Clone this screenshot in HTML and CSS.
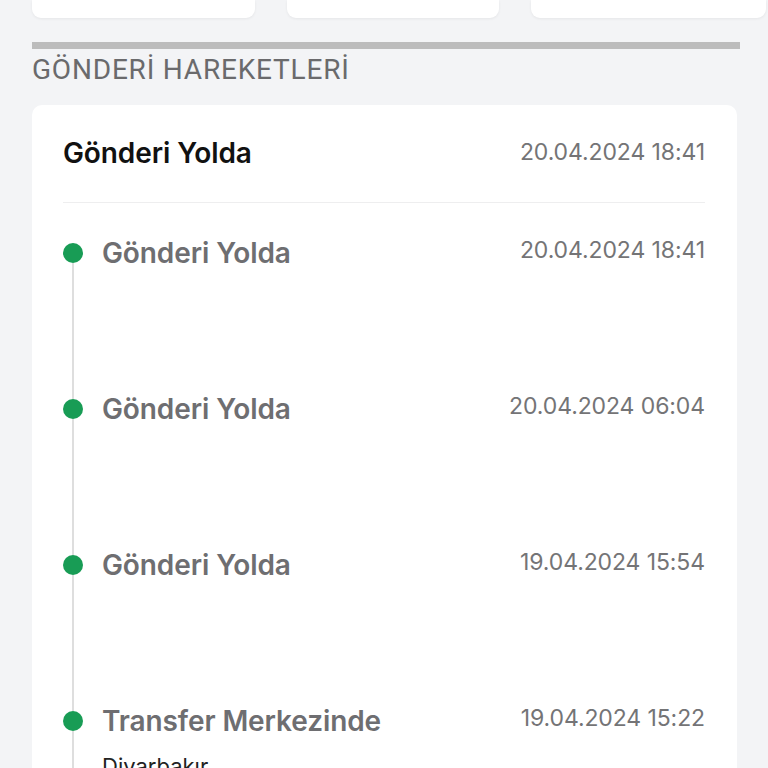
FILE: index.html
```html
<!DOCTYPE html>
<html lang="tr">
<head>
<meta charset="utf-8">
<link rel="stylesheet" href="styles.css">
</head>
<body>
<div class="top-cards">
  <div class="tcard"></div>
  <div class="tcard"></div>
  <div class="tcard"></div>
</div>
<div class="bar"></div>
<h2 class="section-title">GÖNDERİ HAREKETLERİ</h2>
<div class="card">
  <div class="card-head">
    <div class="head-title">Gönderi Yolda</div>
    <div class="date">20.04.2024 18:41</div>
  </div>
  <div class="timeline">
    <div class="item first">
      <div class="rail"><span class="seg top"></span><span class="dot"></span><span class="seg bottom"></span></div>
      <div class="body"><div class="row"><div class="t-title">Gönderi Yolda</div><div class="date">20.04.2024 18:41</div></div></div>
    </div>
    <div class="item">
      <div class="rail"><span class="seg top"></span><span class="dot"></span><span class="seg bottom"></span></div>
      <div class="body"><div class="row"><div class="t-title">Gönderi Yolda</div><div class="date">20.04.2024 06:04</div></div></div>
    </div>
    <div class="item">
      <div class="rail"><span class="seg top"></span><span class="dot"></span><span class="seg bottom"></span></div>
      <div class="body"><div class="row"><div class="t-title">Gönderi Yolda</div><div class="date">19.04.2024 15:54</div></div></div>
    </div>
    <div class="item">
      <div class="rail"><span class="seg top"></span><span class="dot"></span><span class="seg bottom"></span></div>
      <div class="body"><div class="row"><div class="t-title">Transfer Merkezinde</div><div class="date">19.04.2024 15:22</div></div><div class="sub">Diyarbakır</div></div>
    </div>
  </div>
</div>
</body>
</html>
```
FILE: styles.css
```css
html, body {
  margin: 0;
  padding: 0;
  background: #f3f4f6;
  font-family: Inter, "Noto Sans", sans-serif;
  overflow: hidden;
  height: 768px;
}
.top-cards {
  display: grid;
  grid-template-columns: 223px 212px 235px;
  column-gap: 32px;
  padding-left: 32px;
  height: 18px;
}
.tcard {
  background: #fff;
  border-radius: 0 0 9px 9px;
  box-shadow: 0 1px 3px rgba(0,0,0,0.06);
}
.bar {
  margin: 24px 0 0 32px;
  width: 708px;
  height: 7px;
  background: #bcbcbc;
}
.section-title {
  margin: 3px 0 0 32px;
  font-family: Roboto, "Noto Sans", sans-serif;
  font-weight: 400;
  font-size: 28px;
  line-height: 36px;
  color: #6a6a6c;
  letter-spacing: 0.8px;
  height: 53px;
}
.card {
  margin-left: 32px;
  width: 705px;
  background: #fff;
  border-radius: 10px 10px 0 0;
  padding: 0 32px 0 31px;
  box-sizing: border-box;
  height: 700px;
}
.card-head {
  display: flex;
  justify-content: space-between;
  align-items: center;
  padding: 30px 0 31px;
  border-bottom: 1px solid #eeeeef;
}
.head-title {
  font-size: 28px;
  line-height: 36px;
  font-weight: 600;
  color: #111;
  letter-spacing: -0.1px;
}
.date {
  font-size: 23px;
  line-height: 30px;
  color: #747476;
  letter-spacing: -0.1px;
}
.card-head .date { margin-top: -3px; }
.timeline {
  padding-top: 32px;
}
.item {
  display: grid;
  grid-template-columns: 20px 1fr;
  column-gap: 19px;
  height: 156px;
}
.rail {
  display: flex;
  flex-direction: column;
  align-items: center;
}
.seg {
  width: 2px;
  background: #dedede;
}
.seg.top { height: 8px; }
.first .seg.top { background: transparent; }
.seg.bottom { flex: 1; }
.dot {
  width: 20px;
  height: 20px;
  border-radius: 50%;
  background: #189c55;
}
.row {
  display: flex;
  justify-content: space-between;
  align-items: center;
  height: 36px;
}
.row .date { margin-top: -6px; }
.t-title {
  font-size: 28px;
  line-height: 36px;
  font-weight: 600;
  color: #6e6e71;
  letter-spacing: -0.1px;
}
.sub {
  margin-top: 14px;
  font-size: 22px;
  line-height: 26px;
  color: #222;
}
```
